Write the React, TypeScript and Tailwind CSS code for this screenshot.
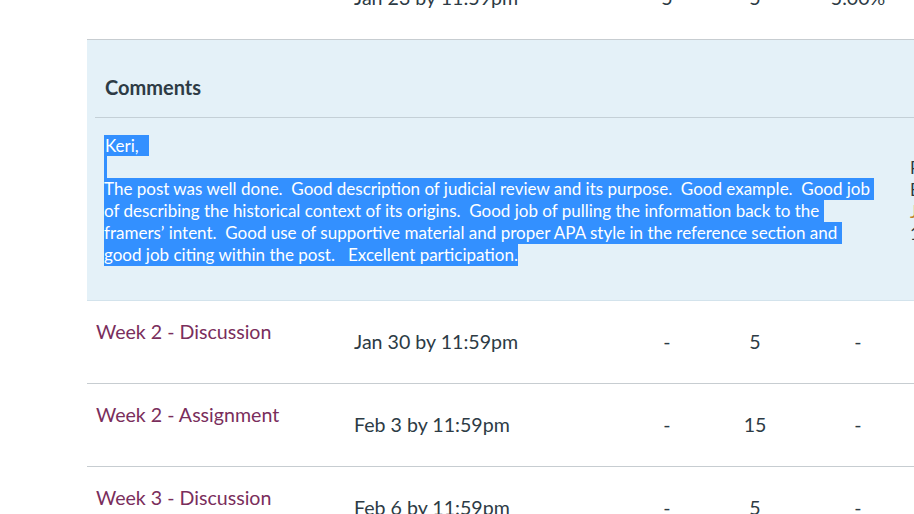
import React from 'react';

interface GradeRow {
  title: string;
  due: string;
  score: string;
  outOf: string;
  percent: string;
}

const rows: GradeRow[] = [
  { title: 'Week 2 - Discussion', due: 'Jan 30 by 11:59pm', score: '-', outOf: '5', percent: '-' },
  { title: 'Week 2 - Assignment', due: 'Feb 3 by 11:59pm', score: '-', outOf: '15', percent: '-' },
  { title: 'Week 3 - Discussion', due: 'Feb 6 by 11:59pm', score: '-', outOf: '5', percent: '-' },
];

// selected comment lines (kept apart so the highlight breaks where the original does)
const commentLines = [
  'The post was well done.  Good description of judicial review and its purpose.  Good example.  Good job ',
  'of describing the historical context of its origins.  Good job of pulling the information back to the ',
  'framers\u2019 intent.  Good use of supportive material and proper APA style in the reference section and ',
  'good job citing within the post.   Excellent participation.',
];

function Row({ row, title }: { row: GradeRow; title?: boolean }) {
  return (
    <div className="flex h-[83px] border-b border-[#c7cdd1] text-[19.6px]">
      <div className="w-[258px] shrink-0 pl-[9px] pt-[16px]">
        {title && <a className="leading-[24px] text-[#7a2e5c]">{row.title}</a>}
      </div>
      <div className="w-[275px] shrink-0 pl-[9px] flex items-center leading-[24px]">{row.due}</div>
      <div className="w-[94px] shrink-0 flex items-center justify-center">{row.score}</div>
      <div className="w-[82px] shrink-0 flex items-center justify-center">{row.outOf}</div>
      <div className="w-[124px] shrink-0 flex items-center justify-center">{row.percent}</div>
    </div>
  );
}

export default function App() {
  return (
    <div className="w-[914px] h-[514px] overflow-hidden bg-white text-[#2d3b45] font-[Lato,sans-serif]">
      <div className="ml-[87px] -mt-[43px] w-[900px]">
        <Row row={{ title: 'Week 1 - Discussion', due: 'Jan 23 by 11:59pm', score: '5', outOf: '5', percent: '5.00%' }} />

        {/* comments row */}
        <div className="h-[261px] bg-[#e4f1f8] border-b border-[#d3e3ec] pl-[8px]">
          <div className="pt-[35px] pb-[18px] pl-[10px] border-b border-[#c4d0d7]">
            <h3 className="text-[20px] leading-[24px] font-bold">Comments</h3>
          </div>
          <div className="flex pt-[17px] pl-[9px]">
            <div className="w-[806px] shrink-0 text-[17px] leading-[22px] text-white">
              <div className="h-[21px]">
                <span className="inline-block h-[21px] leading-[21px] bg-[#3390ff] pl-[1px] pr-[6px] whitespace-pre">Keri, </span>
              </div>
              <div className="h-[22px]">
                <span className="inline-block h-[22px] w-[3px] bg-[#3390ff]" />
              </div>
              {commentLines.map((line) => (
                <div key={line} className="h-[22px]">
                  <span className="inline-block h-[22px] bg-[#3390ff] whitespace-pre">{line}</span>
                </div>
              ))}
            </div>
            <div className="mt-[22px] shrink-0 text-[17px] leading-[22px] whitespace-nowrap">
              <div>Posted</div>
              <div>By Instructor</div>
              <div className="text-[#c0822a]">Jan 28</div>
              <div>11:02am</div>
            </div>
          </div>
        </div>

        {rows.map((row) => (
          <Row key={row.title} row={row} title />
        ))}
      </div>
    </div>
  );
}
